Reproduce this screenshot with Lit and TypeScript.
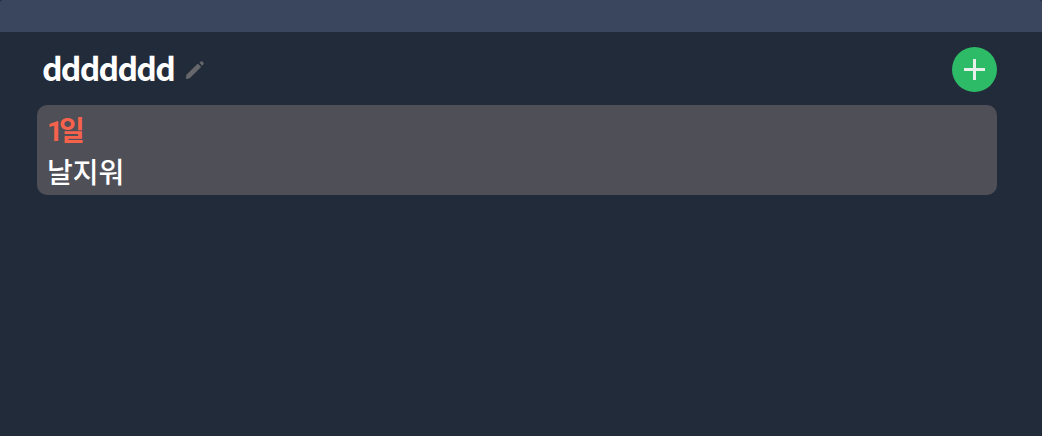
import { LitElement, html, css } from 'lit'
import { customElement, property } from 'lit/decorators.js'

interface Entry {
  day: string
  text: string
}

@customElement('day-card')
export class DayCard extends LitElement {
  static styles = css`
    :host {
      display: block;
      box-sizing: border-box;
      height: 90px;
      padding: 5px 10px;
      border-radius: 10px;
      background: #4f4f58;
      color: #fff;
    }

    .day,
    .text {
      height: 40px;
      line-height: 40px;
      font-size: 28px;
      font-weight: 500;
      white-space: nowrap;
    }

    .day {
      color: #f7624c;
      font-family: Roboto, 'Noto Sans CJK KR', sans-serif;
      font-weight: 700;
      line-height: 44px;
      letter-spacing: -4px;
    }

    .text {
      line-height: 42px;
    }
  `

  @property() day = ''
  @property() text = ''

  render() {
    return html`
      <div class="day">${this.day}</div>
      <div class="text">${this.text}</div>
    `
  }
}

@customElement('app-root')
export class AppRoot extends LitElement {
  static styles = css`
    :host {
      display: flex;
      flex-direction: column;
      height: 100vh;
      overflow: hidden;
      background: #222b39;
      font-family: 'Noto Sans CJK KR', sans-serif;
    }

    .bar {
      flex: none;
      height: 32px;
      border-radius: 3px 3px 0 0;
      background: #3a465e;
    }

    .header {
      display: flex;
      align-items: center;
      height: 45px;
      padding: 15px 45px 13px 42px;
    }

    .title {
      margin: 0;
      padding-bottom: 4px;
      color: #fff;
      font-size: 32px;
      font-weight: 700;
      letter-spacing: -1.75px;
      line-height: 41px;
    }

    .edit,
    .add {
      display: block;
      padding: 0;
      border: 0;
      cursor: pointer;
    }

    .edit {
      margin-left: 11px;
      background: none;
    }

    .add {
      width: 45px;
      height: 45px;
      margin-left: auto;
      border-radius: 50%;
      background: #2dbb67;
    }

    svg {
      display: block;
    }

    .list {
      display: flex;
      flex-direction: column;
      gap: 10px;
      padding: 0 45px 0 37px;
    }
  `

  @property() name = 'ddddddd'

  @property({ type: Array })
  entries: Entry[] = [{ day: '1일', text: '날지워' }]

  render() {
    return html`
      <div class="bar"></div>
      <div class="header">
        <h1 class="title">${this.name}</h1>
        <button class="edit">
          <svg width="20" height="20" viewBox="0 0 20 20" fill="#66676a">
            <path d="M1.4 14.7 L12.1 4.2 Q12.8 3.6 13.5 4.2 L15.6 6.3 Q16.1 6.9 15.6 7.5 L5 18.1 L2 19 Q.8 19.2 .9 18Z" />
            <path d="M14.3 2.8 L15.2 1.9 Q16.7.6 18.1 1.9 Q19.4 3.3 18.1 4.8 L17.2 5.7Z" />
          </svg>
        </button>
        <button class="add">
          <svg width="45" height="45" viewBox="0 0 45 45" fill="#e6efe9">
            <path d="M21 12h3v9h9v3h-9v9h-3v-9h-9v-3h9z" />
          </svg>
        </button>
      </div>
      <div class="list">
        ${this.entries.map((e) => html`<day-card .day=${e.day} .text=${e.text}></day-card>`)}
      </div>
    `
  }
}

declare global {
  interface HTMLElementTagNameMap {
    'day-card': DayCard
    'app-root': AppRoot
  }
}
